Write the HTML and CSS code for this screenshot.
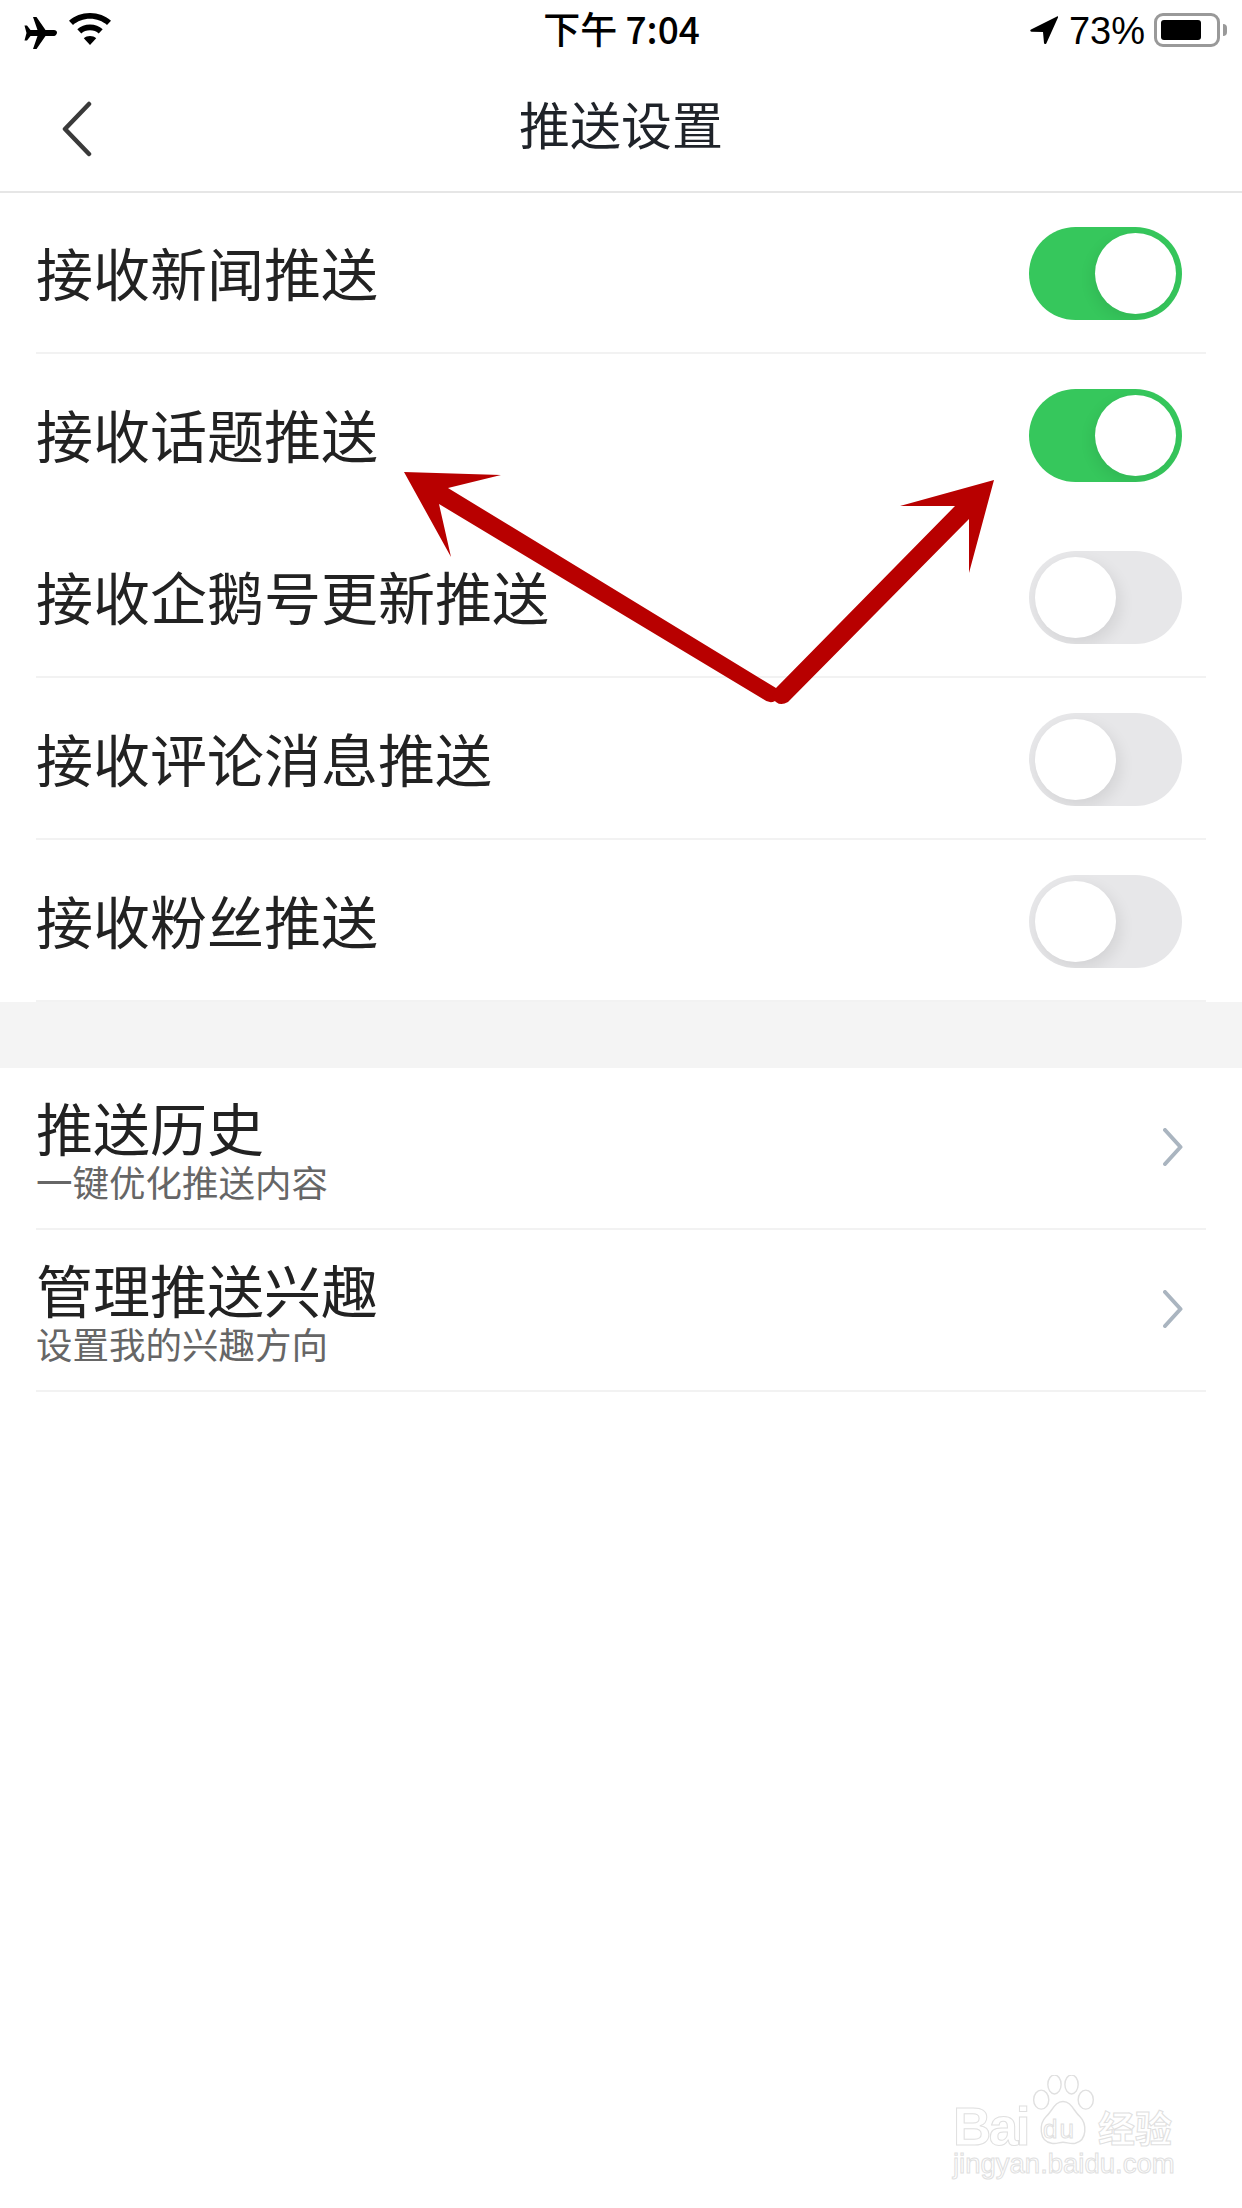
FILE: index.html
```html
<!DOCTYPE html>
<html lang="zh-CN">

<head>
    <meta charset="UTF-8">
    <meta name="viewport" content="width=device-width, initial-scale=1.0">
    <title>推送设置</title>
    <link rel="stylesheet" href="styles.css">
</head>

<body>
    <div class="page">
        <div class="status-bar">
            <div class="status-left">
                <!-- airplane -->
                <svg class="icon-plane" width="34" height="32" viewBox="0 0 34 32">
                    <path d="M33 15.500c0-1.600-1.400-2.500-3-2.500H21.500L12.500 0H9l4.500 13H6.500L3 8.500H0.500L2.500 16 0.500 23.500H3L6.500 19h7L9 32h3.500l9-13H30c1.600 0 3-2 3-3.500z" />
                </svg>
                <!-- wifi -->
                <svg class="icon-wifi" width="44" height="34" viewBox="0 0 44 34">
                    <path d="M22 0C13.800 0 6.400 3 1 7.800L5 12C9.400 8.200 15.400 5.800 22 5.800S34.600 8.200 39 12L43 7.800C37.600 3 30.200 0 22 0z" />
                    <path d="M22 11.500c-5 0-9.400 1.800-12.700 4.700l4 4.200c2.200-2 5.200-3.200 8.700-3.200s6.500 1.200 8.700 3.200l4-4.200C31.400 13.300 27 11.500 22 11.500z" />
                    <path d="M22 23c-2.400 0-4.600.9-6.200 2.300L22 32l6.200-6.700C26.600 23.900 24.400 23 22 23z" />
                </svg>
            </div>
            <div class="status-time">下午 7:04</div>
            <div class="status-right">
                <!-- location arrow -->
                <svg class="icon-location" width="28" height="28" viewBox="0 0 28 28">
                    <path d="M27 0.500 1 13.500c-1.200.7-.8 2 .5 2.200L13 16l1 11c.2 1.300 1.700 1.500 2.300.4L28 1.500c.3-.8-.3-1.400-1-1z" />
                </svg>
                <span class="battery-text">73%</span>
                <div class="battery">
                    <div class="battery-level"></div>
                </div>
                <div class="battery-tip"></div>
            </div>
        </div>

        <div class="nav-bar">
            <svg class="icon-back" width="32" height="56" viewBox="0 0 32 56">
                <path d="M28 3 4 28l24 25" />
            </svg>
            <div class="nav-title">推送设置</div>
        </div>

        <div class="group first">
            <div class="row">
                <div class="row-label">接收新闻推送</div>
                <div class="switch on"><div class="knob"></div></div>
            </div>
            <div class="row no-line">
                <div class="row-label">接收话题推送</div>
                <div class="switch on"><div class="knob"></div></div>
            </div>
            <div class="row">
                <div class="row-label">接收企鹅号更新推送</div>
                <div class="switch"><div class="knob"></div></div>
            </div>
            <div class="row">
                <div class="row-label">接收评论消息推送</div>
                <div class="switch"><div class="knob"></div></div>
            </div>
            <div class="row">
                <div class="row-label">接收粉丝推送</div>
                <div class="switch"><div class="knob"></div></div>
            </div>
        </div>

        <div class="spacer"></div>

        <div class="group">
            <div class="row">
                <div class="row-text">
                    <div class="row-title">推送历史</div>
                    <div class="row-sub">一键优化推送内容</div>
                </div>
                <svg class="icon-more" width="20" height="38" viewBox="0 0 20 38">
                    <path d="M2 2l15.500 17L2 36" />
                </svg>
            </div>
            <div class="row">
                <div class="row-text">
                    <div class="row-title">管理推送兴趣</div>
                    <div class="row-sub">设置我的兴趣方向</div>
                </div>
                <svg class="icon-more" width="20" height="38" viewBox="0 0 20 38">
                    <path d="M2 2l15.500 17L2 36" />
                </svg>
            </div>
        </div>

        <!-- red arrows drawn over the list -->
        <svg class="arrows" width="1242" height="720" viewBox="0 0 1242 720">
            <path d="M404 472 501 475 448 488 776 688 778 698Q772 706 763 699L439 504 451 557Z" />
            <path d="M994 480 900 506 955 506 776 688 772 697Q778 708 788 702L969 519 969 573Z" />
        </svg>

        <div class="watermark">
            <div class="wm-logo">
                <span class="wm-bai">Bai</span>
                <div class="wm-mark">
                    <svg class="wm-paw" width="66" height="72" viewBox="0 0 66 76">
                        <ellipse cx="10" cy="26" rx="8" ry="10" />
                        <ellipse cx="24" cy="10" rx="7" ry="10" />
                        <ellipse cx="42" cy="10" rx="7" ry="10" />
                        <ellipse cx="57" cy="26" rx="8" ry="10" />
                        <path d="M33 28c-9 0-11 10-18 16-7 7-8 26 6 28 5 1 8-1 12-1s8 2 13 1c13-3 12-21 5-28-7-6-9-16-18-16z" />
                    </svg>
                    <span class="wm-du">du</span>
                </div>
                <span class="wm-cn">经验</span>
            </div>
            <div class="wm-url">jingyan.baidu.com</div>
        </div>
    </div>
</body>

</html>
```

FILE: styles.css
```css
* {
    box-sizing: border-box;
}

html,
body {
    margin: 0;
    padding: 0;
    background: #fff;
}

.page {
    position: relative;
    width: 1242px;
    height: 2208px;
    overflow: hidden;
    background: #fff;
    font-family: "Noto Sans CJK SC", "Liberation Sans", sans-serif;
    color: #222;
}

/* status bar */
.status-bar {
    display: flex;
    align-items: center;
    justify-content: space-between;
    height: 60px;
    padding: 0 15px 0 24px;
    color: #000;
}

.status-left {
    display: flex;
    align-items: center;
    gap: 10px;
    width: 380px;
}

.icon-plane {
    margin-top: 6px;
}

.status-time {
    margin-right: 8px;
    margin-bottom: 4px;
    font-size: 37px;
    font-weight: 500;
    line-height: 60px;
    white-space: nowrap;
}

.status-right {
    display: flex;
    align-items: center;
    justify-content: flex-end;
    width: 380px;
}

.battery-text {
    margin-top: 2px;
    margin-left: 11px;
    font-family: "Liberation Sans", sans-serif;
    font-size: 38px;
    line-height: 60px;
}

.battery {
    width: 66px;
    height: 34px;
    margin-left: 9px;
    padding: 4px;
    border: 3px solid #999;
    border-radius: 9px;
}

.battery-level {
    width: 40px;
    height: 100%;
    background: #000;
    border-radius: 3px;
}

.battery-tip {
    width: 4px;
    height: 12px;
    margin-left: 3px;
    background: #999;
    border-radius: 0 4px 4px 0;
}

/* nav */
.nav-bar {
    position: relative;
    display: flex;
    align-items: center;
    justify-content: center;
    height: 133px;
    border-bottom: 2px solid #e6e6e6;
}

.icon-back {
    position: absolute;
    left: 61px;
    top: 41px;
}

.icon-back path {
    fill: none;
    stroke: #3a3a3a;
    stroke-width: 4.500;
    stroke-linecap: round;
    stroke-linejoin: round;
}

.nav-title {
    margin-bottom: 5px;
    font-size: 51px;
    line-height: 60px;
    color: #1f2329;
}

/* list */
.group {
    padding: 0 36px;
}

.group.first {
    margin-top: -1px;
}

.row {
    display: flex;
    align-items: center;
    justify-content: space-between;
    height: 162px;
    padding-right: 24px;
    border-bottom: 2px solid #f2f2f2;
}

.row.no-line {
    border-bottom-color: transparent;
}

.row-label {
    margin-bottom: 2px;
    font-size: 57px;
    line-height: 66px;
    color: #222;
}

.row-text {
    margin-top: 3px;
}

.row-title {
    font-size: 57px;
    line-height: 60px;
    color: #222;
}

.row-sub {
    margin-top: 4px;
    font-size: 36.500px;
    line-height: 44px;
    color: #666;
}

.spacer {
    height: 66px;
    background: #f4f4f4;
}

.switch {
    position: relative;
    width: 153px;
    height: 93px;
    margin-top: 3px;
    overflow: hidden;
    background: #e7e7e9;
    border-radius: 47px;
}

.switch.on {
    background: #36c75c;
}

.knob {
    position: absolute;
    left: 6px;
    top: 6px;
    width: 81px;
    height: 81px;
    background: #fff;
    border-radius: 50%;
    box-shadow: 4px 6px 16px rgba(0, 0, 0, 0.09);
}

.switch.on .knob {
    left: 66px;
    box-shadow: -3px 5px 14px rgba(0, 0, 0, 0.08);
}

.icon-more {
    margin-right: -1px;
    margin-bottom: 2px;
}

.icon-more path {
    fill: none;
    stroke: #aab5c0;
    stroke-width: 4;
    stroke-linecap: round;
    stroke-linejoin: round;
}

/* overlay arrows */
.arrows {
    position: absolute;
    left: 0;
    top: 0;
}

.arrows path {
    fill: #b80000;
}

/* watermark */
.watermark {
    position: absolute;
    left: 953px;
    top: 2075px;
    width: 240px;
    color: #fff;
    -webkit-text-stroke: 1px #e0e0e0;
}

.wm-logo {
    display: flex;
    align-items: flex-end;
    height: 72px;
    font-family: "Liberation Sans", sans-serif;
    font-weight: 700;
}

.wm-bai {
    width: 77px;
    font-size: 53px;
    letter-spacing: -2.500px;
    line-height: 40px;
}

.wm-mark {
    position: relative;
    width: 68px;
    height: 72px;
}

.wm-paw {
    fill: #fff;
    stroke: #e0e0e0;
    stroke-width: 1.500;
}

.wm-du {
    position: absolute;
    left: 13px;
    top: 41px;
    font-size: 26px;
    font-weight: 400;
    letter-spacing: 2px;
    line-height: 26px;
}

.wm-cn {
    font-family: "Noto Sans CJK SC", sans-serif;
    font-size: 37px;
    line-height: 40px;
    white-space: nowrap;
}

.wm-url {
    font-family: "Liberation Sans", sans-serif;
    font-size: 27.500px;
    line-height: 34px;
    white-space: nowrap;
}
```
